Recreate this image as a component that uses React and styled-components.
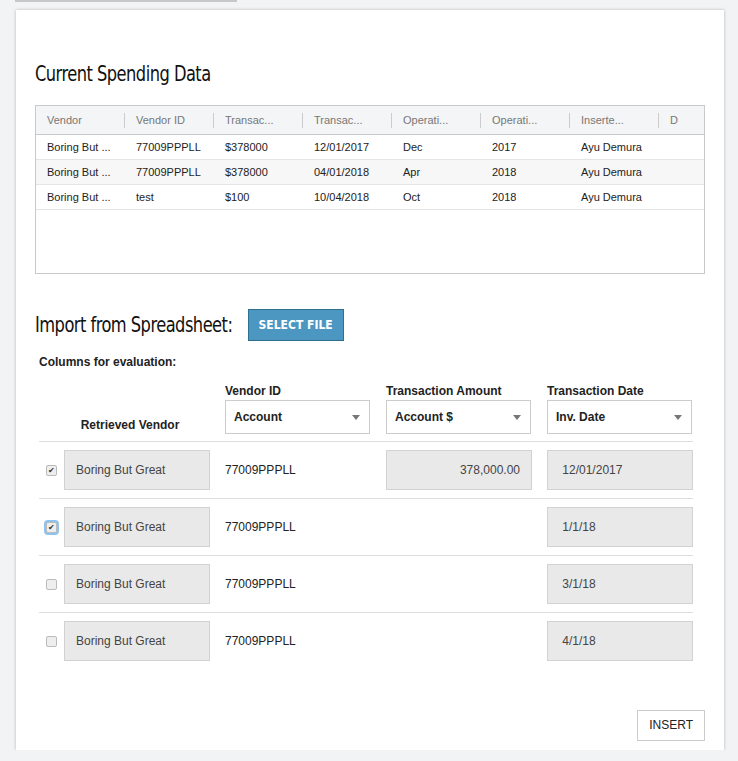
import React from "react";
import styled, { createGlobalStyle } from "styled-components";

const G = createGlobalStyle`
  html,body{margin:0;background:#f2f3f4;font-family:"Liberation Sans",Arial,sans-serif;color:#222;}
`;
const TopTab = styled.div`margin-left:15px;width:222px;height:2px;background:#c8c8c8;`;
const Card = styled.div`
  margin:8px 0 0 16px;width:708px;height:740px;background:#fff;box-sizing:border-box;
  box-shadow:0 0 3px rgba(0,0,0,.25);padding:52px 19px 0 19px;
`;
const H = styled.h2`
  margin:0;font-family:"DejaVu Sans Condensed","DejaVu Sans",sans-serif;font-stretch:condensed;
  font-weight:normal;font-size:21px;letter-spacing:-0.6px;color:#111;transform:scaleX(.86);transform-origin:left;
  display:inline-block;white-space:nowrap;
`;
const Table = styled.div`margin-top:19px;border:1px solid #c9c9c9;height:169px;box-sizing:border-box;`;
const Row = styled.div`
  display:grid;grid-template-columns:repeat(8,89px) 1fr;height:${p=>p.head?29:25}px;align-items:center;
  background:${p=>p.head?"#f4f5f6":p.alt?"#f7f7f7":"#fff"};border-bottom:1px solid ${p=>p.head?"#c9c9c9":"#e4e4e4"};
  font-size:11px;color:${p=>p.head?"#777":"#222"};box-sizing:border-box;
`;
const Cell = styled.div`
  padding-left:11px;white-space:nowrap;overflow:hidden;height:15px;line-height:15px;
  border-right:${p=>p.head?"1px solid #ccc":"none"};
`;
const ImportBar = styled.div`display:flex;align-items:center;gap:5px;margin-top:35px;`;
const SelBtn = styled.div`
  background:#4b97c1;border:1px solid #2f6f92;color:#fff;font-size:12px;font-weight:bold;
  padding:0 10px;height:30px;line-height:30px;font-family:"DejaVu Sans Condensed","DejaVu Sans",sans-serif;font-stretch:condensed;
`;
const Sub = styled.div`font-size:12px;font-weight:bold;margin:14px 0 0 4px;`;
const Grid = styled.div`
  display:grid;grid-template-columns:25px 161px 161px 161px 146px;margin:15px 6px 0 4px;
`;
const HeadCell = styled.div`
  font-size:12px;font-weight:bold;display:flex;flex-direction:column;justify-content:flex-end;
  padding-bottom:${p=>p.pb||7}px;border-bottom:1px solid #ddd;gap:2px;
`;
const Select = styled.div`
  width:145px;height:34px;border:1px solid #ccc;box-sizing:border-box;display:flex;align-items:center;
  justify-content:space-between;padding:0 9px 0 8px;font-size:12px;font-weight:bold;color:#222;
`;
const Tri = styled.span`width:0;height:0;border-left:4px solid transparent;border-right:4px solid transparent;border-top:5px solid #777;`;
const BodyCell = styled.div`
  height:56px;display:flex;align-items:center;border-bottom:${p=>p.last?"none":"1px solid #ddd"};font-size:12px;
`;
const Box = styled.div`
  width:146px;height:40px;box-sizing:border-box;background:#e9e9e9;border:1px solid #d2d2d2;display:flex;align-items:center;
  justify-content:${p=>p.right?"flex-end":"flex-start"};padding:0 11px;font-size:12px;color:#444;
`;
const Check = styled.div`
  width:9px;height:9px;margin-left:7px;border:1px solid #bbb;border-radius:2px;background:#eee;font-size:8px;line-height:9px;text-align:center;color:#333;
  box-shadow:${p=>p.focus?"0 0 0 2px #8fc3ee":"none"};
`;
const Footer = styled.div`display:flex;justify-content:flex-end;margin-top:41px;`;
const Insert = styled.div`border:1px solid #ccc;padding:0 11px;height:29px;line-height:29px;font-size:12px;color:#222;`;

const rows=[["Boring But ...","77009PPPLL","$378000","12/01/2017","Dec","2017","Ayu Demura"],["Boring But ...","77009PPPLL","$378000","04/01/2018","Apr","2018","Ayu Demura"],["Boring But ...","test","$100","10/04/2018","Oct","2018","Ayu Demura"]];
const heads=["Vendor","Vendor ID","Transac...","Transac...","Operati...","Operati...","Inserte...","D"];
const imp=[[true,false,"378,000.00","12/01/2017"],[true,true,null,"1/1/18"],[false,false,null,"3/1/18"],[false,false,null,"4/1/18"]];

export default function App(){
  return <>
    <G/>
    <TopTab/>
    <Card>
      <H>Current Spending Data</H>
      <Table>
        <Row head>{heads.map((h,i)=><Cell head key={i}>{h}</Cell>)}<div/></Row>
        {rows.map((r,i)=><Row key={i} alt={i===1}>{r.map((c,j)=><Cell key={j}>{c}</Cell>)}</Row>)}
      </Table>
      <ImportBar><H>Import from Spreadsheet:</H><SelBtn style={{marginLeft:-22}}>SELECT FILE</SelBtn></ImportBar>
      <Sub>Columns for evaluation:</Sub>
      <Grid>
        <HeadCell/>
        <HeadCell pb={9}>&nbsp;&nbsp;&nbsp;&nbsp;&nbsp;Retrieved Vendor</HeadCell>
        <HeadCell>Vendor ID<Select>Account<Tri/></Select></HeadCell>
        <HeadCell>Transaction Amount<Select>Account $<Tri/></Select></HeadCell>
        <HeadCell>Transaction Date<Select>Inv. Date<Tri/></Select></HeadCell>
        {imp.map((r,i)=>{const last=i===3;return <React.Fragment key={i}>
          <BodyCell last={last}><Check focus={r[1]}>{r[0]?"✔":""}</Check></BodyCell>
          <BodyCell last={last}><Box>Boring But Great</Box></BodyCell>
          <BodyCell last={last}>77009PPPLL</BodyCell>
          <BodyCell last={last}>{r[2]&&<Box right>{r[2]}</Box>}</BodyCell>
          <BodyCell last={last}><Box>&nbsp;{r[3]}</Box></BodyCell>
        </React.Fragment>})}
      </Grid>
      <Footer><Insert>INSERT</Insert></Footer>
    </Card>
  </>;
}
